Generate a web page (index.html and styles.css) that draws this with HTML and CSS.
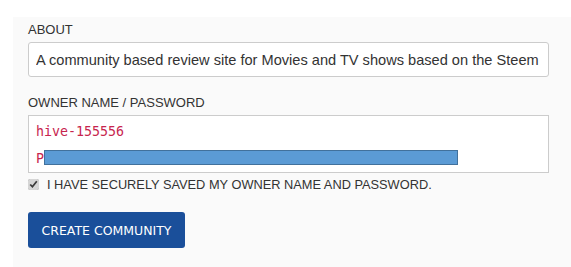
FILE: index.html
```html
<!DOCTYPE html>
<html lang="en">
<head>
    <meta charset="UTF-8">
    <title>Create Community</title>
    <link rel="stylesheet" href="styles.css">
</head>
<body>

<div class="panel">
    <div class="field">
        <label for="about">About</label>
        <input type="text" id="about" value="A community based review site for Movies and TV shows based on the Steem blockchain">
    </div>

    <div class="field">
        <label>Owner name / password</label>
        <div class="keys">
            <code>hive-155556</code>
            <code>P<span class="redacted"></span></code>
        </div>
    </div>

    <label class="confirm">
        <input type="checkbox" checked>
        <span>I have securely saved my owner name and password.</span>
    </label>

    <button>Create Community</button>
</div>

</body>
</html>
```

FILE: styles.css
```css
body {
    margin: 0;
    padding-top: 17px;
    background-color: #ffffff;
    font-family: 'Liberation Sans', Arial, sans-serif;
    color: #333333;
}
.panel {
    margin-left: 13px;
    background-color: #fafafa;
    padding: 4px 22px 19px 15px;
}
.field {
    margin-bottom: 17px;
}
.field label {
    display: block;
    font-size: 13px;
    line-height: 17px;
    text-transform: uppercase;
    margin-bottom: 4px;
}
.field input {
    display: block;
    width: 100%;
    height: 35px;
    box-sizing: border-box;
    padding: 0 7px;
    border: 1px solid #cccccc;
    border-radius: 3px;
    background-color: #ffffff;
    color: #333333;
    font-family: 'Liberation Sans', Arial, sans-serif;
    font-size: 14.6px;
}
.keys {
    background-color: #ffffff;
    border: 1px solid #cccccc;
    height: 58px;
    box-sizing: border-box;
    padding: 2px 7px;
}
.keys code {
    display: block;
    font-family: 'DejaVu Sans Mono', 'Liberation Mono', monospace;
    font-size: 13.3px;
    line-height: 27px;
    color: #c7254e;
}
.redacted {
    display: inline-block;
    vertical-align: -2px;
    width: 412px;
    height: 13px;
    background-color: #5b9bd5;
    border: 1px solid #41719c;
}
.confirm {
    display: flex;
    align-items: center;
    gap: 8px;
    margin-top: -13px;
    font-size: 12.8px;
    line-height: 15px;
    text-transform: uppercase;
}
.confirm input {
    margin: 0;
    width: 11px;
    height: 11px;
    accent-color: #d6d6d6;
}
button {
    margin-top: 20px;
    height: 36px;
    width: 157px;
    border: none;
    border-radius: 3px;
    background-color: #1a4f9a;
    color: #ffffff;
    font-family: 'DejaVu Sans', sans-serif;
    font-size: 12.5px;
    text-transform: uppercase;
    cursor: pointer;
}
```
